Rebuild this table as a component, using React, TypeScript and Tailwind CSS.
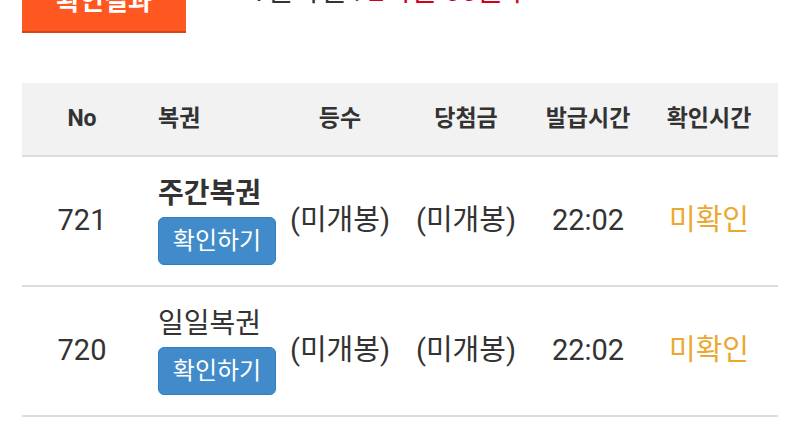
import React from 'react';

const rows = [
  { no: '721', name: '주간복권', bold: true, rank: '(미개봉)', prize: '(미개봉)', issued: '22:02', checked: '미확인' },
  { no: '720', name: '일일복권', bold: false, rank: '(미개봉)', prize: '(미개봉)', issued: '22:02', checked: '미확인' },
];

const cols = 'grid grid-cols-[120px_142px_112px_140px_104px_138px] items-center';

export default function App() {
  return (
    <div
      className="w-[800px] h-[439px] overflow-hidden bg-white text-[#333]"
      style={{ fontFamily: 'Roboto, "Noto Sans CJK KR", sans-serif' }}
    >
      {/* top bar, cut off by the viewport */}
      <div className="flex items-start h-[63px] -mt-[30px] px-[22px]">
        <button className="h-full w-[164px] bg-[#ff5722] border-b-2 border-[#d2461b] text-white text-[26px] font-bold flex items-center justify-center pt-[2px]">
          확인결과
        </button>
        <div className="ml-[64px] mt-[4px] text-[29px] leading-[34px]">
          1일확인 : <span className="text-[#d0021b]">2시간 00분후</span>
        </div>
      </div>

      <div className="mt-[50px] mx-[22px] w-[756px]">
        {/* header */}
        <div className={`${cols} h-[74px] bg-[#f2f2f2] border-b-2 border-[#dddddd] text-[23px] font-bold`}>
          <div className="text-center">No</div>
          <div className="pl-4">복권</div>
          <div className="text-center">등수</div>
          <div className="text-center">당첨금</div>
          <div className="text-center">발급시간</div>
          <div className="text-center">확인시간</div>
        </div>

        {rows.map((r) => (
          <div key={r.no} className={`${cols} h-[130px] border-b-2 border-[#dddddd] text-[29px]`}>
            <div className="text-center">{r.no}</div>
            <div className="pl-4 flex flex-col items-start">
              <div className={`leading-[34px] text-[28px] ${r.bold ? 'font-bold' : ''}`}>{r.name}</div>
              <button className="mt-[6px] h-[48px] w-[118px] rounded-[6px] bg-[#428bca] border border-[#357ebd] text-white text-[24px] leading-none">
                확인하기
              </button>
            </div>
            <div className="text-center">{r.rank}</div>
            <div className="text-center">{r.prize}</div>
            <div className="text-center">{r.issued}</div>
            <div className="text-center text-[#eba831]">{r.checked}</div>
          </div>
        ))}
      </div>
    </div>
  );
}
